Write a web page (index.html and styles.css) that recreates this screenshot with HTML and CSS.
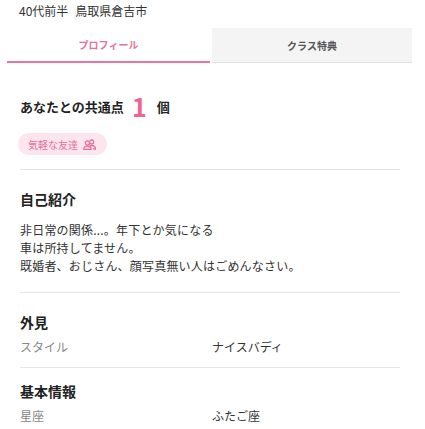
FILE: index.html
```html
<!DOCTYPE html>
<html lang="ja">
<head>
<meta charset="utf-8">
<link rel="stylesheet" href="styles.css">
</head>
<body>
<div class="page">
  <div class="meta"><span class="age">40代前半</span><span>鳥取県倉吉市</span></div>
  <div class="tabs">
    <div class="tab tab-active">プロフィール</div>
    <div class="tab">クラス特典</div>
  </div>
  <div class="content">
    <section class="common">
      <h2 class="common-title"><span>あなたとの共通点</span><span class="count">1</span><span>個</span></h2>
      <span class="badge">気軽な友達
        <svg class="badge-icon" width="13" height="11" viewBox="0 0 13 11" fill="none" stroke="currentColor" stroke-width="1.3">
          <circle cx="8.6" cy="3" r="2"/>
          <path d="M6.6 7.2 a3.6 3 0 0 1 5.8 2.8 h-2.2"/>
          <circle cx="4.4" cy="4" r="2.1"/>
          <path d="M0.8 10.3 a3.6 3.1 0 0 1 7.2 0 z"/>
        </svg>
      </span>
    </section>
    <section class="block">
      <h3 class="block-title">自己紹介</h3>
      <p class="intro">非日常の関係...。年下とか気になる<br>車は所持してません。<br>既婚者、おじさん、顔写真無い人はごめんなさい。</p>
    </section>
    <section class="block block-appearance">
      <h3 class="block-title">外見</h3>
      <div class="row"><span class="label">スタイル</span><span class="value">ナイスバディ</span></div>
    </section>
    <section class="block block-basic">
      <h3 class="block-title">基本情報</h3>
      <div class="row"><span class="label">星座</span><span class="value">ふたご座</span></div>
    </section>
  </div>
</div>
</body>
</html>
```

FILE: styles.css
```css
* { box-sizing: border-box; }
html, body {
  margin: 0;
  padding: 0;
  background: #ffffff;
}
body {
  font-family: "Noto Sans CJK JP", "Noto Sans", sans-serif;
  color: #333333;
  width: 425px;
  height: 429px;
  overflow: hidden;
}
.meta {
  padding: 3px 19px 0;
  height: 19px;
  font-size: 12px;
  line-height: 16px;
  color: #333333;
  display: flex;
  gap: 7px;
}
.tabs {
  margin: 9px 0 0 7px;
  display: grid;
  grid-template-columns: 203px 200px;
  column-gap: 2px;
  height: 35px;
}
.tab {
  display: flex;
  align-items: center;
  justify-content: center;
  font-size: 10px;
  font-weight: bold;
  color: #555555;
  background: #f4f4f4;
  border-bottom: 1px solid #e2e2e2;
}
.tab-active {
  background: #ffffff;
  color: #e8729a;
  border-bottom: 2px solid #e8769c;
}
.content {
  padding: 0 25px 0 20px;
}
.common {
  padding-top: 33px;
  padding-bottom: 14px;
}
.common-title {
  margin: 0;
  height: 20px;
  display: flex;
  align-items: center;
  gap: 7px;
  font-size: 13px;
  font-weight: bold;
  color: #222222;
}
.count {
  font-size: 25px;
  line-height: 20px;
  color: #f0648f;
  margin: 0 3px 0 1px;
}
.badge {
  margin: 17px 0 0 -2px;
  display: inline-flex;
  align-items: center;
  gap: 5px;
  height: 22px;
  padding: 0 11px 0 10px;
  border-radius: 11px;
  background: #fde5ed;
  color: #e8709a;
  font-size: 10px;
}
.badge-icon {
  display: block;
}
.block {
  border-top: 1px solid #e6e6e6;
  padding-top: 19px;
  padding-bottom: 17px;
}
.block-title {
  margin: 0;
  font-size: 14px;
  line-height: 20px;
  font-weight: bold;
  color: #222222;
}
.intro {
  margin: 12px 0 0;
  font-size: 12px;
  line-height: 18px;
  color: #333333;
  letter-spacing: 0.2px;
}
.block-appearance {
  padding-bottom: 11px;
}
.block-basic {
  padding-top: 13px;
}
.row {
  margin-top: 6px;
  display: grid;
  grid-template-columns: 192px 1fr;
  font-size: 12px;
  line-height: 18px;
}
.label {
  color: #888888;
}
.value {
  color: #333333;
}
```
